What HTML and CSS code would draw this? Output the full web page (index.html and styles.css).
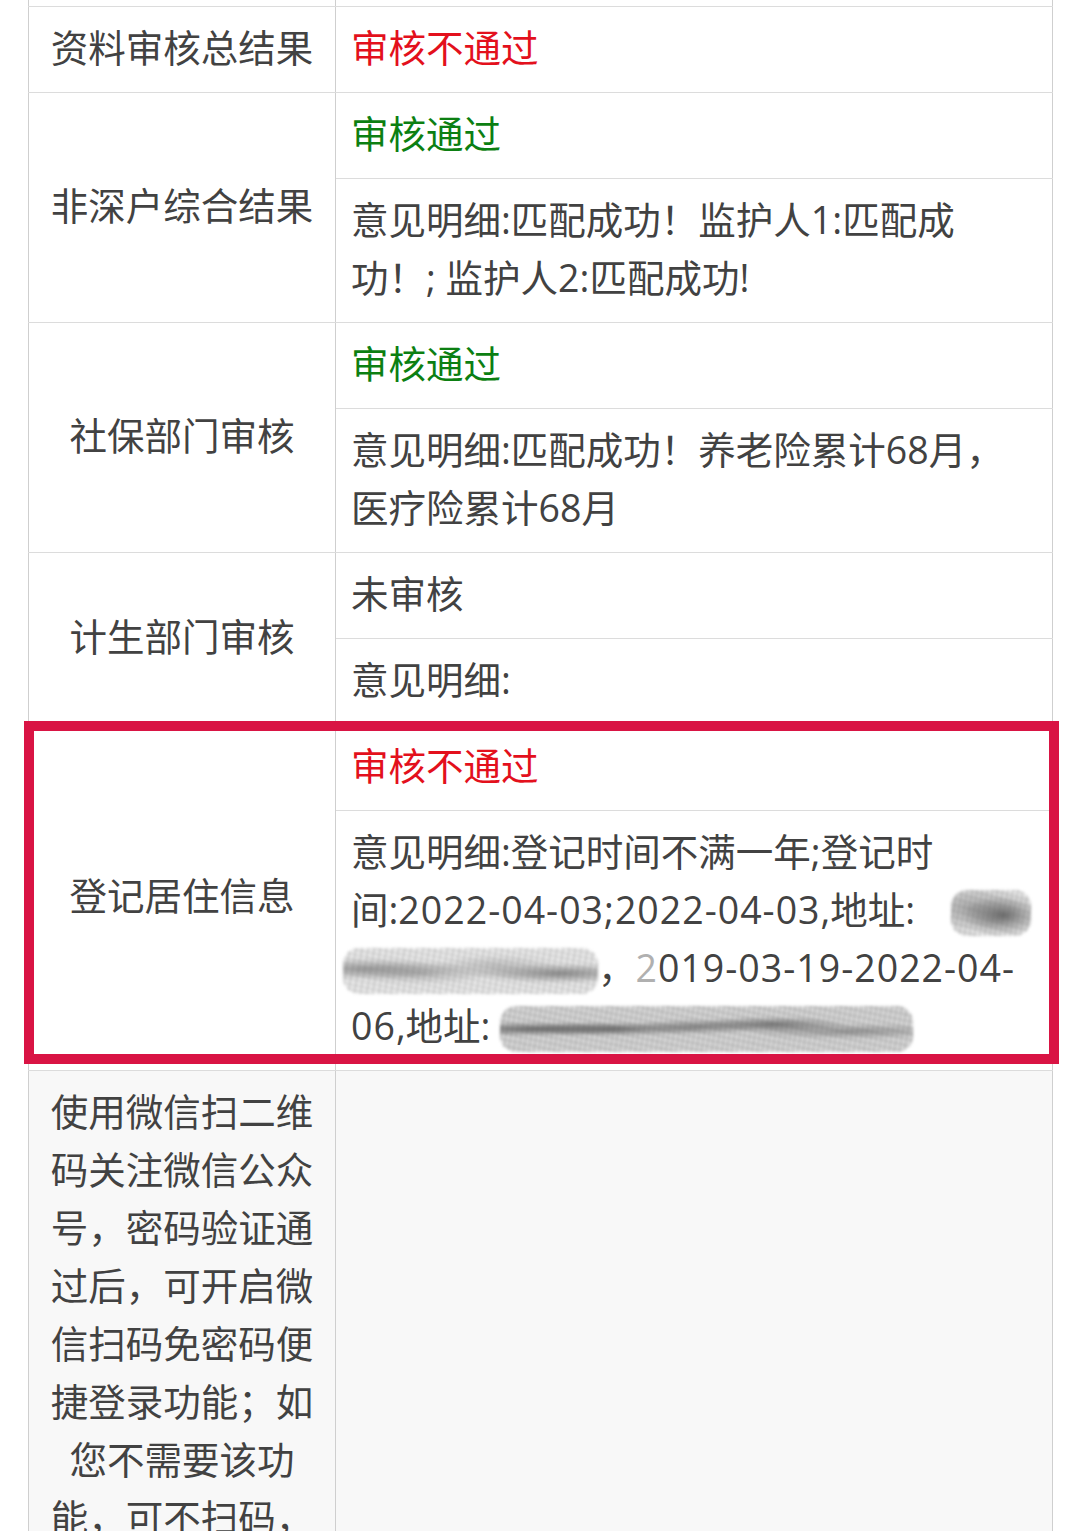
FILE: index.html
```html
<!DOCTYPE html>
<html lang="zh-CN">
<head>
<meta charset="utf-8">
<title>审核结果</title>
<link rel="stylesheet" href="styles.css">
</head>
<body>
<div class="page">
  <table class="audit">
    <colgroup><col class="col-label"><col class="col-value"></colgroup>
    <tr class="stub"><td></td><td></td></tr>
    <tr><td class="label">资料审核总结果</td><td class="value fail">审核不通过</td></tr>
    <tr><td class="label" rowspan="2">非深户综合结果</td><td class="value pass">审核通过</td></tr>
    <tr><td class="value">意见明细:匹配成功！监护人1:匹配成<br>功！; 监护人2:匹配成功!</td></tr>
    <tr><td class="label" rowspan="2">社保部门审核</td><td class="value pass">审核通过</td></tr>
    <tr><td class="value">意见明细:匹配成功！养老险累计68月，<br>医疗险累计68月</td></tr>
    <tr><td class="label" rowspan="2">计生部门审核</td><td class="value">未审核</td></tr>
    <tr><td class="value">意见明细:</td></tr>
    <tr><td class="label" rowspan="2">登记居住信息</td><td class="value fail">审核不通过</td></tr>
    <tr><td class="value">意见明细:登记时间不满一年;登记时<br>间:<span class="num">2022-04-03;2022-04-03</span>,地址:<span class="redact redact-a"></span><br><span class="redact redact-b"></span>，<span class="num"><span class="faded">2</span>019-03-19-2022-04-</span><br><span class="num">06</span>,地址:<span class="redact redact-c"></span></td></tr>
    <tr class="muted"><td class="label">使用微信扫二维码关注微信公众号，密码验证通过后，可开启微信扫码免密码便捷登录功能；如您不需要该功能，可不扫码，直接使用账号密码登录系统。</td><td class="value"></td></tr>
  </table>
  <div class="highlight"></div>
</div>
</body>
</html>
```

FILE: styles.css
```css
html, body {
  margin: 0;
  padding: 0;
  background: #ffffff;
}

.page {
  position: relative;
  padding: 0 27px 0 28px;
}

.audit {
  width: 1025px;
  border-collapse: collapse;
  table-layout: fixed;
  font-family: "Open Sans", "Noto Sans CJK SC", "Noto Sans", sans-serif;
  font-size: 37.5px;
  line-height: 58px;
  color: #424242;
}

.col-label { width: 307px; }

.audit td {
  border-top: 1px solid #dcdcdc;
  border-bottom: 1px solid #dcdcdc;
  border-left: 1px solid #cfcfcf;
  border-right: 1px solid #cfcfcf;
  padding: 12px 15px 15px 15px;
  vertical-align: middle;
}

.audit .stub td {
  border-top: none;
  height: 6px;
  padding: 0;
}

.audit td.label {
  text-align: center;
  padding-left: 14px;
  padding-right: 14px;
}

.audit td.value {
  text-align: left;
  white-space: nowrap;
}

.fail { color: #e3101c; }
.pass { color: #0c7f12; }

.muted td { background: #f8f8f8; }

.audit .muted td.label {
  white-space: normal;
  vertical-align: top;
}

.num { letter-spacing: 1px; }

.faded { color: #b0b0b0; }

.redact {
  display: inline-block;
  height: 46px;
  vertical-align: -12px;
  border-radius: 16px;
  filter: blur(1.4px);
}

.redact-a {
  width: 80px;
  margin-left: 36px;
  background:
    repeating-linear-gradient(100deg, rgba(90,90,90,.25) 0 2px, transparent 2px 5px),
    repeating-linear-gradient(15deg, rgba(130,130,130,.25) 0 2px, transparent 2px 6px),
    radial-gradient(ellipse at 65% 55%, rgba(60,60,60,.7), transparent 55%),
    radial-gradient(ellipse at 25% 40%, rgba(110,110,110,.5), transparent 60%),
    rgba(190,190,190,.3);
}

.redact-b {
  width: 255px;
  margin-left: -8px;
  background:
    repeating-linear-gradient(100deg, rgba(100,100,100,.22) 0 2px, transparent 2px 6px),
    repeating-linear-gradient(12deg, rgba(140,140,140,.22) 0 2px, transparent 2px 5px),
    radial-gradient(ellipse at 8% 45%, rgba(90,90,90,.55), transparent 30%),
    radial-gradient(ellipse at 30% 55%, rgba(120,120,120,.45), transparent 30%),
    radial-gradient(ellipse at 60% 40%, rgba(130,130,130,.4), transparent 30%),
    radial-gradient(ellipse at 85% 55%, rgba(70,70,70,.6), transparent 28%),
    rgba(195,195,195,.3);
}

.redact-c {
  width: 413px;
  margin-left: 10px;
  background:
    repeating-linear-gradient(100deg, rgba(80,80,80,.25) 0 2px, transparent 2px 5px),
    repeating-linear-gradient(12deg, rgba(120,120,120,.25) 0 2px, transparent 2px 6px),
    radial-gradient(ellipse at 8% 50%, rgba(60,60,60,.7), transparent 22%),
    radial-gradient(ellipse at 28% 50%, rgba(70,70,70,.65), transparent 22%),
    radial-gradient(ellipse at 48% 45%, rgba(80,80,80,.6), transparent 22%),
    radial-gradient(ellipse at 66% 40%, rgba(60,60,60,.65), transparent 20%),
    radial-gradient(ellipse at 85% 55%, rgba(90,90,90,.55), transparent 22%),
    rgba(160,160,160,.35);
}

.highlight {
  position: absolute;
  top: 721px;
  left: 24px;
  width: 1015px;
  height: 323px;
  border: 10px solid #d91444;
  pointer-events: none;
}
```
